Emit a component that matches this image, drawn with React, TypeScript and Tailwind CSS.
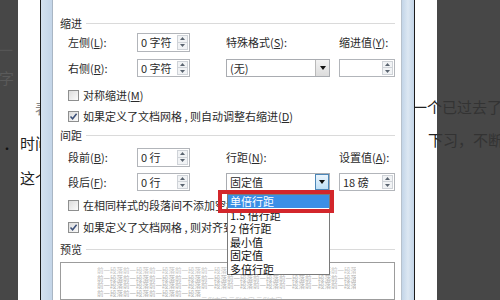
import React from "react";

function U({ c }: { c: string }) {
  return <span className="underline">{c}</span>;
}

function Spinner() {
  return (
    <div className="flex flex-col w-[11px] h-[calc(100%-2px)] mr-[1px] border border-[#cfd3d8] bg-[#f1f3f5]">
      <div className="flex-1 flex items-center justify-center border-b border-[#cfd3d8]">
        <svg width="5" height="3" viewBox="0 0 5 3">
          <path d="M0 3 L2.5 0 L5 3Z" fill="#5a6470" />
        </svg>
      </div>
      <div className="flex-1 flex items-center justify-center">
        <svg width="5" height="3" viewBox="0 0 5 3">
          <path d="M0 0 L2.5 3 L5 0Z" fill="#5a6470" />
        </svg>
      </div>
    </div>
  );
}

function NumInput({ text, w }: { text: string; w: string }) {
  return (
    <div className={`${w} h-full border border-[#b2b5ba] bg-white flex items-center`}>
      <div className="flex-1 pl-[3px] whitespace-nowrap">{text}</div>
      <Spinner />
    </div>
  );
}

function Select({ text, open }: { text: string; open?: boolean }) {
  return (
    <div className="w-[104px] h-full border border-[#a9acb1] bg-white flex items-center">
      <div className="flex-1 pl-[3px] whitespace-nowrap">{text}</div>
      <div
        className={
          open
            ? "w-[14px] h-full flex items-center justify-center border border-[#4c87b8] bg-gradient-to-b from-[#eaf5fd] to-[#bfe0f6]"
            : "w-[14px] h-full flex items-center justify-center border-l border-[#b9b9b9] bg-gradient-to-b from-[#f2f2f2] to-[#dcdcdc]"
        }
      >
        <svg width="6" height="4" viewBox="0 0 6 4">
          <path d="M0 0 L6 0 L3 4Z" fill="#111" />
        </svg>
      </div>
    </div>
  );
}

function Check({ checked, text }: { checked?: boolean; text: React.ReactNode }) {
  return (
    <div className="flex items-center h-[16px] ml-[8px] gap-[4px] whitespace-nowrap">
      <div className="w-[11px] h-[11px] border border-[#8e8f8f] bg-gradient-to-br from-[#dcdcdc] to-[#fbfbfb] flex items-center justify-center shrink-0">
        {checked && (
          <svg width="9" height="9" viewBox="0 0 9 9">
            <path d="M1.5 4.5 L3.6 6.8 L7.6 1.8" stroke="#3b4f78" strokeWidth="1.5" fill="none" />
          </svg>
        )}
      </div>
      <span>{text}</span>
    </div>
  );
}

function Heading({ text }: { text: string }) {
  return (
    <div className="flex items-center h-[14px]">
      <span className="whitespace-nowrap">{text}</span>
      <div className="flex-1 h-px bg-[#dadada] ml-[4px]" />
    </div>
  );
}

const previewLine = "前一段落前一段落前一段落前一段落前一段落前一段落前一段落前一段落前一段落前一段落";

export default function App() {
  return (
    <div className="w-[500px] h-[300px] flex overflow-hidden bg-white text-[#2a2a2a] text-[11px] font-['Noto_Sans_CJK_SC',sans-serif]">
      {/* left dark margin */}
      <div className="w-[18px] h-full bg-[#474747] flex flex-col shrink-0 overflow-hidden text-[15px] leading-[16px]">
        <div className="mt-[42px] text-[#555] ml-[-2px]">一</div>
        <div className="mt-[12px] text-[#5a5a5a] ml-[-1px]">字</div>
        <div className="mt-[55px] ml-[1px] text-[#111] text-[12px]">•</div>
      </div>
      {/* left document strip */}
      <div className="w-[22px] h-full bg-white flex flex-col shrink-0 overflow-hidden text-[15px] leading-[16px] text-[#222] whitespace-nowrap">
        <div className="mt-[100px] ml-[17px] text-[#888]">表</div>
        <div className="mt-[19px] ml-[2px]">时间</div>
        <div className="mt-[19px] ml-[2px]">这个</div>
      </div>
      {/* left frame */}
      <div className="w-px h-full bg-[#1c1c1c] shrink-0" />
      <div className="w-[11px] h-full bg-gradient-to-r from-[#d3e1ef] to-[#c3d5e8] shrink-0" />
      <div className="w-px h-full bg-[#a9b6c4] shrink-0" />

      {/* dialog content */}
      <div className="relative w-[348px] h-full bg-white shrink-0 pl-[7px] pr-[6px] pt-[16px] flex flex-col">
        <Heading text="缩进" />
        <div className="flex items-center h-[20px] mt-[3px]">
          <div className="ml-[8px] w-[69px] whitespace-nowrap">
            左侧(<U c="L" />):
          </div>
          <NumInput text="0 字符" w="w-[53px]" />
          <div className="ml-[36px] w-[104px] whitespace-nowrap">
            特殊格式(<U c="S" />):
          </div>
          <div className="ml-[9px] w-[56px] whitespace-nowrap">
            缩进值(<U c="Y" />):
          </div>
        </div>
        <div className="flex items-center h-[19px] mt-[7px]">
          <div className="ml-[8px] w-[69px] whitespace-nowrap">
            右侧(<U c="R" />):
          </div>
          <NumInput text="0 字符" w="w-[53px]" />
          <div className="ml-[36px] h-full">
            <Select text="(无)" />
          </div>
          <div className="ml-[9px] h-full">
            <NumInput text="" w="w-[56px]" />
          </div>
        </div>
        <div className="mt-[10px]">
          <Check text={<>对称缩进(<U c="M" />)</>} />
        </div>
        <div className="mt-[5px]">
          <Check checked text={<>如果定义了文档网格 , 则自动调整右缩进(<U c="D" />)</>} />
        </div>
        <div className="mt-[4px]">
          <Heading text="间距" />
        </div>
        <div className="flex items-center h-[19px] mt-[6px]">
          <div className="ml-[8px] w-[69px] whitespace-nowrap">
            段前(<U c="B" />):
          </div>
          <NumInput text="0 行" w="w-[53px]" />
          <div className="ml-[36px] w-[104px] whitespace-nowrap">
            行距(<U c="N" />):
          </div>
          <div className="ml-[9px] w-[56px] whitespace-nowrap">
            设置值(<U c="A" />):
          </div>
        </div>
        <div className="flex items-center h-[19px] mt-[6px]">
          <div className="ml-[8px] w-[69px] whitespace-nowrap">
            段后(<U c="F" />):
          </div>
          <NumInput text="0 行" w="w-[53px]" />
          <div className="ml-[36px] h-full">
            <Select text="固定值" open />
          </div>
          <div className="ml-[9px] h-full">
            <NumInput text="18 磅" w="w-[56px]" />
          </div>
        </div>
        <div className="mt-[6px]">
          <Check text={<>在相同样式的段落间不添加空格(<U c="C" />)</>} />
        </div>
        <div className="mt-[6px]">
          <Check checked text={<>如果定义了文档网格 , 则对齐到网格(<U c="W" />)</>} />
        </div>
        <div className="mt-[7px]">
          <Heading text="预览" />
        </div>
        <div className="mt-[6px] h-[60px] border border-[#9c9c9c] bg-white overflow-hidden pt-[4px] pl-[36px] pr-[38px] text-[6.5px] leading-[7.5px] text-[#b3b3b3]">
          <div className="whitespace-nowrap overflow-hidden text-[#c4c4c4]">{previewLine}</div>
          <div className="whitespace-nowrap overflow-hidden">{previewLine}</div>
          <div className="whitespace-nowrap overflow-hidden">{previewLine}</div>
          <div className="whitespace-nowrap overflow-hidden">前一段落前一段落前一段落前一段落</div>
          <div className="whitespace-nowrap overflow-hidden pl-[104px] text-[#cbcbcb]">示例文字 示例文字 示例文字</div>
        </div>

        {/* dropdown list */}
        <div className="absolute left-[174px] top-[194px] w-[103px] h-[81px] bg-white border border-[#7a7a7a] text-[11px] text-[#111] z-10">
          <div className="h-[13px] bg-[#3b8fe6] text-white flex items-center pl-[2px] whitespace-nowrap">单倍行距</div>
          <div className="h-[13.5px] flex items-center pl-[2px] whitespace-nowrap">1.5 倍行距</div>
          <div className="h-[13.5px] flex items-center pl-[2px] whitespace-nowrap">2 倍行距</div>
          <div className="h-[13.5px] flex items-center pl-[2px] whitespace-nowrap">最小值</div>
          <div className="h-[13.5px] flex items-center pl-[2px] whitespace-nowrap">固定值</div>
          <div className="h-[13.5px] flex items-center pl-[2px] whitespace-nowrap">多倍行距</div>
        </div>
        {/* red highlight frame */}
        <div className="absolute left-[165px] top-[190px] w-[116px] h-[23px] border-[4px] border-[#d3262b] z-20" />
      </div>

      {/* right frame */}
      <div className="w-px h-full bg-[#b7c1cc] shrink-0" />
      <div className="w-[12px] h-full bg-gradient-to-r from-[#c3d5e8] via-[#dce7f2] to-[#c3d5e8] shrink-0" />
      <div className="w-px h-full bg-[#1c1c1c] shrink-0" />

      {/* right document strip */}
      <div className="w-[22px] h-full bg-white flex flex-col shrink-0 overflow-hidden text-[15px] leading-[16px] text-[#222] whitespace-nowrap">
        <div className="mt-[99px] ml-[-3px]">一个已过去了</div>
        <div className="mt-[17px] ml-[13px]">下习，不断</div>
      </div>
      {/* right dark margin */}
      <div className="flex-1 h-full bg-[#474747] flex flex-col overflow-hidden text-[15px] leading-[16px] text-[#333] whitespace-nowrap">
        <div className="mt-[99px] ml-[-25px]">一个已过去了</div>
        <div className="mt-[17px] ml-[-9px]">下习，不断</div>
      </div>
    </div>
  );
}
